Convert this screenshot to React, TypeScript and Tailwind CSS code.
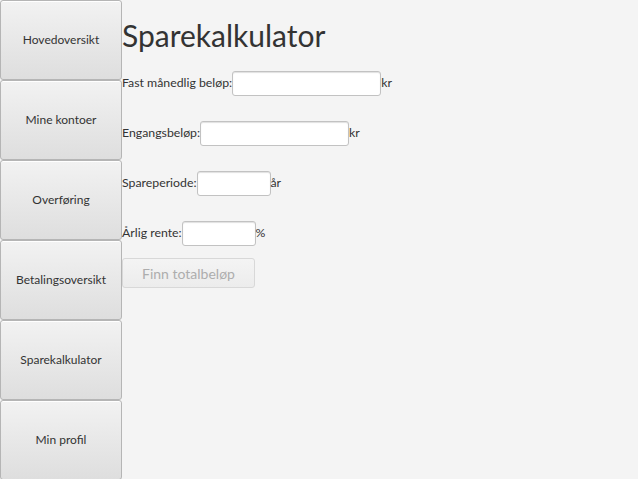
import React from "react";

const menu = [
  "Hovedoversikt",
  "Mine kontoer",
  "Overføring",
  "Betalingsoversikt",
  "Sparekalkulator",
  "Min profil",
];

const fields = [
  { label: "Fast månedlig beløp:", unit: "kr", w: "w-[149px]" },
  { label: "Engangsbeløp:", unit: "kr", w: "w-[149px]" },
  { label: "Spareperiode:", unit: "år", w: "w-[74px]" },
  { label: "Årlig rente:", unit: "%", w: "w-[74px]" },
];

export default function App() {
  return (
    <div className="flex h-[479px] w-[638px] overflow-hidden bg-[#f4f4f4] font-['Lato',sans-serif] text-[#333]">
      <div className="flex w-[122px] flex-col">
        {menu.map((m) => (
          <button
            key={m}
            className="flex h-[80px] w-full shrink-0 items-center justify-center rounded-[3px] border border-[#b5b5b5] bg-gradient-to-b from-[#f2f2f2] to-[#dedede] text-[12px] text-[#333] shadow-[inset_0_1px_0_#fff]"
          >
            {m}
          </button>
        ))}
      </div>
      <div className="flex flex-col pt-[15px]">
        <h1 className="text-[30px] leading-[40px] text-[#333]">Sparekalkulator</h1>
        <div className="mt-[16px] flex flex-col gap-[25px]">
          {fields.map((f) => (
            <div key={f.label} className="flex h-[25px] items-center text-[12.3px]">
              <span>{f.label}</span>
              <input
                className={`${f.w} h-[25px] rounded-[3px] border border-[#c2c2c2] bg-white shadow-[inset_0_1px_1px_#e0e0e0] outline-none`}
              />
              <span>{f.unit}</span>
            </div>
          ))}
        </div>
        <button
          disabled
          className="mt-[12px] h-[30px] w-[133px] rounded-[3px] border border-[#d8d8d8] bg-gradient-to-b from-[#f4f4f4] to-[#ececec] text-[14px] text-[#adadad]"
        >
          Finn totalbeløp
        </button>
      </div>
    </div>
  );
}
